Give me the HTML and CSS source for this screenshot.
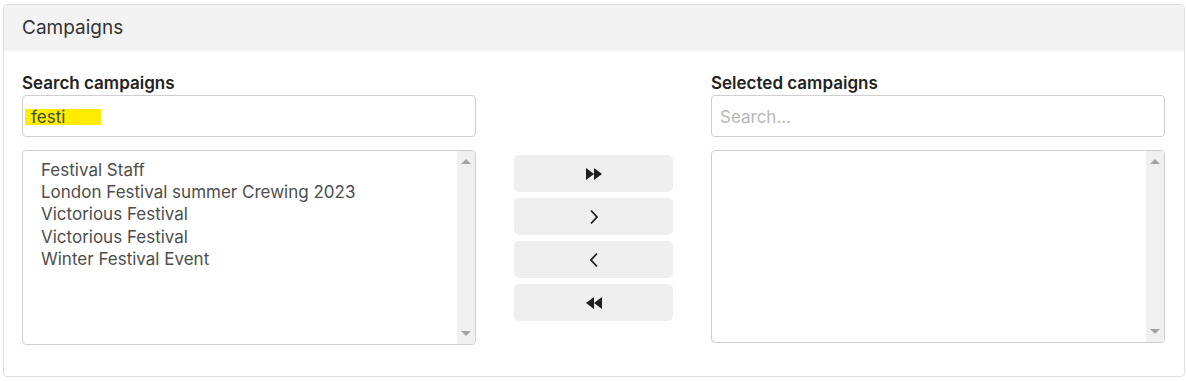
FILE: index.html
```html
<!DOCTYPE html>
<html>
<head>
<meta charset="utf-8">
<link rel="stylesheet" href="styles.css">
</head>
<body>
<div class="card">
  <div class="card-header">Campaigns</div>
  <div class="card-body">
    <div class="col">
      <label class="label">Search campaigns</label>
      <div class="input"><span class="hl">festi</span></div>
      <div class="listbox">
        <div class="options">
          <div class="opt">Festival Staff</div>
          <div class="opt">London Festival summer Crewing 2023</div>
          <div class="opt">Victorious Festival</div>
          <div class="opt">Victorious Festival</div>
          <div class="opt">Winter Festival Event</div>
        </div>
        <div class="scrollbar">
          <span class="arrow up"></span>
          <span class="arrow down"></span>
        </div>
      </div>
    </div>
    <div class="buttons">
      <button class="btn"><svg width="18" height="12" viewBox="0 0 18 12"><path d="M1 0 L9 6 L1 12 Z M9 0 L17 6 L9 12 Z" fill="#1e1e1e"/></svg></button>
      <button class="btn"><svg width="10" height="16" viewBox="0 0 10 16"><path d="M2 1.5 L8 8 L2 14.5" fill="none" stroke="#1e1e1e" stroke-width="1.8"/></svg></button>
      <button class="btn"><svg width="10" height="16" viewBox="0 0 10 16"><path d="M8 1.5 L2 8 L8 14.5" fill="none" stroke="#1e1e1e" stroke-width="1.8"/></svg></button>
      <button class="btn"><svg width="18" height="12" viewBox="0 0 18 12"><path d="M17 0 L9 6 L17 12 Z M9 0 L1 6 L9 12 Z" fill="#1e1e1e"/></svg></button>
    </div>
    <div class="col">
      <label class="label">Selected campaigns</label>
      <div class="input"><span class="placeholder">Search...</span></div>
      <div class="listbox short">
        <div class="options"></div>
        <div class="scrollbar">
          <span class="arrow up"></span>
          <span class="arrow down"></span>
        </div>
      </div>
    </div>
  </div>
</div>
</body>
</html>
```

FILE: styles.css
```css
* { box-sizing: border-box; }
html, body { margin: 0; padding: 0; background: #fff; }
body {
  font-family: "Inter", "Liberation Sans", sans-serif;
  color: #333;
  padding: 4px 2px 0 3px;
}
.card {
  width: 1182px;
  height: 373px;
  border: 1px solid #dedede;
  border-radius: 4px;
  overflow: hidden;
}
.card-header {
  height: 46px;
  background: #f3f3f3;
  font-size: 19px;
  color: #333;
  padding: 11px 0 0 18px;
}
.card-body {
  display: grid;
  grid-template-columns: 454px 159px 454px;
  column-gap: 38px;
  padding: 22px 0 0 18px;
}
.label {
  display: block;
  font-size: 17px;
  font-weight: 600;
  color: #222;
  height: 22px;
}
.input {
  height: 42px;
  border: 1px solid #cfcfcf;
  border-radius: 4px;
  padding: 11px 0 0 2px;
  font-size: 17px;
}
.hl {
  display: inline-block;
  background: #ffec00;
  color: #3d4d2c;
  line-height: 16px;
  padding: 0 36px 0 6px;
}
.placeholder {
  color: #b8b8b8;
  padding-left: 6px;
}
.listbox {
  margin-top: 13px;
  height: 195px;
  border: 1px solid #cfcfcf;
  border-radius: 4px;
  display: flex;
  overflow: hidden;
}
.listbox.short { height: 193px; }
.options {
  flex: 1;
  padding: 8px 0 0 18px;
}
.opt {
  font-size: 17px;
  line-height: 22.2px;
  color: #4d4d4d;
}
.scrollbar {
  width: 18px;
  background: #f0f0f0;
  display: flex;
  flex-direction: column;
  justify-content: space-between;
  align-items: center;
  padding: 8px 0 8px;
}
.arrow {
  width: 0;
  height: 0;
  border-left: 5px solid transparent;
  border-right: 5px solid transparent;
}
.arrow.up { border-bottom: 5px solid #a3a3a3; }
.arrow.down { border-top: 5px solid #a3a3a3; }
.buttons {
  display: flex;
  flex-direction: column;
  gap: 6px;
  padding-top: 82px;
}
.btn {
  height: 37px;
  border: none;
  border-radius: 5px;
  background: #efefef;
  display: flex;
  align-items: center;
  justify-content: center;
  padding: 0;
}
```
